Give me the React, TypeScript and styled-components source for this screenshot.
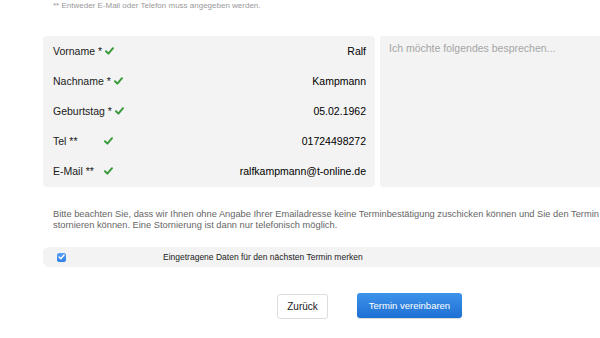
import React from "react";
import styled, { createGlobalStyle } from "styled-components";

const Global = createGlobalStyle`
  html, body { margin: 0; padding: 0; background: #fff; }
  body { font-family: "Liberation Sans", Arial, Helvetica, sans-serif; color: #222; overflow: hidden; }
`;

const Page = styled.div`
  width: 600px;
  height: 338px;
  overflow: hidden;
  position: relative;
`;

const Note = styled.div`
  font-size: 8px;
  color: #999;
  padding: 1px 0 0 53px;
  height: 11px;
  line-height: 9px;
`;

const Panels = styled.div`
  display: flex;
  gap: 5px;
  margin: 24px 0 0 43px;
  width: 620px;
`;

const DataPanel = styled.div`
  width: 332px;
  height: 151px;
  background: #f3f3f3;
  border-radius: 4px;
  flex-shrink: 0;
`;

const Row = styled.div`
  height: 30px;
  display: flex;
  align-items: center;
  padding: 0 9px 0 10px;
  font-size: 10.5px;
  color: #1a1a1a;
`;

const Label = styled.span`
  min-width: 48px;
  white-space: nowrap;
`;

const Check = styled.svg`
  width: 9px;
  height: 8px;
  margin-left: 3px;
`;

const Value = styled.span`
  margin-left: auto;
  white-space: nowrap;
  color: #000;
`;

const TextArea = styled.div`
  width: 240px;
  height: 151px;
  background: #f3f3f3;
  border-radius: 3px;
  box-sizing: border-box;
  padding: 6px 9px;
  font-size: 10.5px;
  color: #a5a5a5;
  flex-shrink: 0;
`;

const Info = styled.p`
  margin: 22px 0 0 53px;
  width: 560px;
  font-size: 9.3px;
  line-height: 11px;
  color: #666;
`;

const RememberRow = styled.label`
  display: flex;
  align-items: center;
  margin: 16px 0 0 43px;
  width: 600px;
  height: 20px;
  background: #f3f3f3;
  border-radius: 6px 0 0 6px;
  font-size: 8.5px;
  color: #222;
`;

const Box = styled.span`
  width: 9px;
  height: 9px;
  margin-left: 14px;
  border-radius: 2px;
  background: linear-gradient(#5ba0f5, #2f7fe6);
  display: flex;
  align-items: center;
  justify-content: center;
`;

const RememberText = styled.span`
  margin-left: 97px;
`;

const Buttons = styled.div`
  display: flex;
  align-items: center;
  gap: 29px;
  margin: 25px 0 0 277px;
`;

const Back = styled.button`
  width: 51px;
  height: 25px;
  background: #fff;
  border: 1px solid #ddd;
  border-radius: 3px;
  font-family: inherit;
  font-size: 10px;
  color: #222;
  padding: 0;
  margin-top: 2px;
`;

const Primary = styled.button`
  width: 105px;
  height: 25px;
  border: none;
  border-radius: 3px;
  background: linear-gradient(#3d94ea, #1f6fd4);
  color: #fff;
  font-family: inherit;
  font-size: 9.5px;
  padding: 0;
  box-shadow: 0 1px 1px rgba(0,0,0,0.15);
`;

const Tick = () => (
  <Check viewBox="0 0 9 8">
    <path d="M1 4.3 L3.4 6.6 L8 1.2" fill="none" stroke="#3a9a3a" strokeWidth="2" strokeLinecap="round" strokeLinejoin="round" />
  </Check>
);

const rows: [string, string][] = [
  ["Vorname *", "Ralf"],
  ["Nachname *", "Kampmann"],
  ["Geburtstag *", "05.02.1962"],
  ["Tel **", "01724498272"],
  ["E-Mail **", "ralfkampmann@t-online.de"],
];

export default function App() {
  return (
    <Page>
      <Global />
      <Note>** Entweder E-Mail oder Telefon muss angegeben werden.</Note>
      <Panels>
        <DataPanel>
          {rows.map(([l, v]) => (
            <Row key={l}>
              <Label>{l}</Label>
              <Tick />
              <Value>{v}</Value>
            </Row>
          ))}
        </DataPanel>
        <TextArea>Ich möchte folgendes besprechen...</TextArea>
      </Panels>
      <Info>
        Bitte beachten Sie, dass wir Ihnen ohne Angabe Ihrer Emailadresse keine Terminbestätigung zuschicken können und Sie den Termin stornieren können. Eine Stornierung ist dann nur telefonisch möglich.
      </Info>
      <RememberRow>
        <Box>
          <svg width="7" height="6" viewBox="0 0 7 6">
            <path d="M1 3 L2.8 4.8 L6 1" fill="none" stroke="#fff" strokeWidth="1.4" strokeLinecap="round" strokeLinejoin="round" />
          </svg>
        </Box>
        <RememberText>Eingetragene Daten für den nächsten Termin merken</RememberText>
      </RememberRow>
      <Buttons>
        <Back>Zurück</Back>
        <Primary>Termin vereinbaren</Primary>
      </Buttons>
    </Page>
  );
}
